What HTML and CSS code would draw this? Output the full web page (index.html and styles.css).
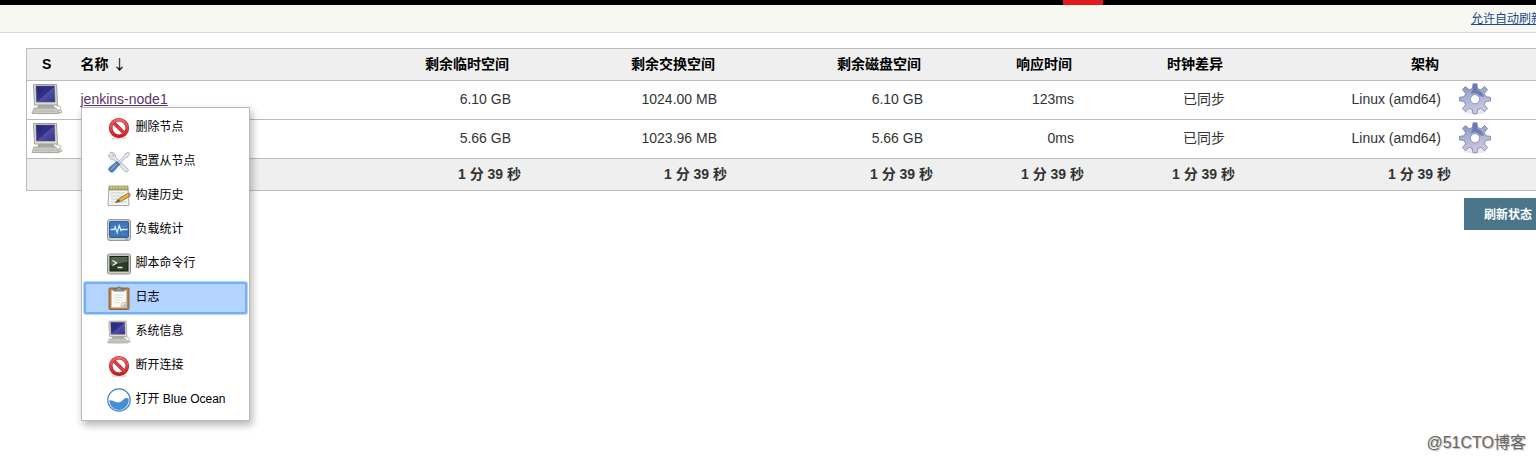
FILE: index.html
```html
<!DOCTYPE html>
<html lang="zh-CN">
<head>
    <meta charset="UTF-8">
    <meta name="viewport" content="width=device-width, initial-scale=1.0">
    <title>节点列表 [Jenkins]</title>
    <link rel="stylesheet" href="styles.css">
</head>
<body>
    <!-- Shared icons -->
    <svg class="icon-defs" aria-hidden="true">
        <defs>
            <linearGradient id="screen" x1="0" y1="0" x2="1" y2="1">
                <stop offset="0" stop-color="#25256f"/>
                <stop offset="0.5" stop-color="#34318e"/>
                <stop offset="0.52" stop-color="#504fa2"/>
                <stop offset="1" stop-color="#35338a"/>
            </linearGradient>
            <linearGradient id="gear-fill" x1="0" y1="0" x2="0.3" y2="1">
                <stop offset="0" stop-color="#7f90bf"/>
                <stop offset="0.5" stop-color="#a9b1d3"/>
                <stop offset="1" stop-color="#cdc6e2"/>
            </linearGradient>
            <linearGradient id="red-fill" x1="0" y1="0" x2="0" y2="1">
                <stop offset="0" stop-color="#ee6a6a"/>
                <stop offset="1" stop-color="#c81c24"/>
            </linearGradient>
            <symbol id="computer" viewBox="0 0 32 32">
                <ellipse cx="15" cy="30" rx="15" ry="1.5" fill="#ddd"/>
                <path d="M25 23c4-1 7 2 3 4" fill="none" stroke="#aaa"/>
                <path d="M8 21h14l2 4H6z" fill="#a9aaa4"/>
                <path d="M2.500 1.500h23l1 20.500h-23z" fill="#dcdcd6" stroke="#9e9e9a"/>
                <path d="M5 3h18.500l.5 16H5.500z" fill="url(#screen)" stroke="#55557a" stroke-width=".6"/>
                <path d="M3 25h22l3 5.500H1z" fill="#d0d0ca" stroke="#9e9e9a" stroke-width=".8"/>
                <path d="M4 27h20M3.500 28.700h22" stroke="#aaa" stroke-width=".8" stroke-dasharray="2 .7"/>
                <path d="M27 27h3l1 2.500h-3z" fill="#ddd" stroke="#999" stroke-width=".6"/>
            </symbol>
            <symbol id="gear" viewBox="0 0 32 32">
                <ellipse cx="16" cy="29" rx="11" ry="2.500" fill="#e8e6ee"/>
                <path d="M14 .8h4l.6 4.700 3.200 1.300 3.800-3.200 3 3-3.200 3.800 1.300 3.300 4.800.6v3.600l-4.800.6-1.300 3.300 3.200 3.800-3 3-3.800-3.200-3.200 1.300-.6 4h-4l-.6-4-3.200-1.300-3.800 3.200-3-3 3.200-3.800-1.300-3.300-4.800-.6v-3.600l4.800-.6 1.300-3.300-3.200-3.800 3-3 3.800 3.200 3.200-1.300z" fill="url(#gear-fill)" stroke="#7580a6" stroke-width=".8" stroke-linejoin="round"/>
                <path d="M13.500 7l1-5.500h3l1 5.500c4 1 6 4 6.500 7l-4.500-1c-2-3-6-3.500-9-1.500z" fill="#4b5fa0" opacity=".6"/>
                <circle cx="16" cy="16.200" r="4.600" fill="#fff" stroke="#8d98bd"/>
            </symbol>
            <symbol id="forbidden" viewBox="0 0 24 24">
                <ellipse cx="12" cy="22" rx="8" ry="1.500" fill="#ddd"/>
                <circle cx="12" cy="12" r="8.300" fill="#fff" stroke="#b5222a" stroke-width="3.600"/>
                <path d="M6.500 6.500l11 11" stroke="#b81a22" stroke-width="3.400"/>
                <circle cx="12" cy="12" r="8.300" fill="none" stroke="url(#red-fill)" stroke-width="2.600"/>
                <path d="M6.500 6.500l11 11" stroke="#de3f45" stroke-width="2.400"/>
            </symbol>
            <symbol id="tools" viewBox="0 0 24 24">
                <path d="M3 2.500c3-1 6 1 5.500 4.500L21 19c1.500 2-1 4-3 2.500L6.500 9.500C3 10 1 7 2 4l3 2.500 2-1z" fill="#dfe3ea" stroke="#a5abb6" stroke-width=".8"/>
                <path d="M21.500 2l1 1-2 4-2 .800-7 7-1.500-1.500 7-7 .800-2z" fill="#e8eaef" stroke="#9ca3b1" stroke-width=".8"/>
                <path d="M10 11.500l2.800 2.800-6.500 7.200c-2 2-6-1.500-4-3.800z" fill="#4f83bd" stroke="#39689f" stroke-width=".9"/>
                <path d="M9.500 14L4 19.500" stroke="#a7c5e5"/>
            </symbol>
            <symbol id="notepad" viewBox="0 0 24 24">
                <path d="M2 4h19l1 17.500H1z" fill="#f5f5ef" stroke="#aaa"/>
                <path d="M2 2h19v4H2z" fill="#a9ad6b" stroke="#87894f" stroke-width=".7"/>
                <path d="M4 1.500v3M7 1.500v3M10 1.500v3M13 1.500v3M16 1.500v3M19 1.500v3" stroke="#e7e8cf" stroke-width=".8"/>
                <path d="M4 9h14M4 12h12M4 15h7M4 18h15" stroke="#c3c3bd" stroke-width=".8"/>
                <path d="M8.500 18.500l3-3.500 9-5.500 2.500 2.700-9.500 5.300z" fill="#e5b543" stroke="#886526" stroke-width=".8"/>
                <path d="M20.500 9.500l1.500-1 2 2.500-1.300 1z" fill="#db6469"/>
                <path d="M8.500 18.500l3-3.500 1.900 2.500z" fill="#655c48"/>
            </symbol>
            <symbol id="monitor" viewBox="0 0 24 24">
                <rect x=".5" y="1.500" width="23" height="21" rx="2.500" fill="#cfd0cc" stroke="#989994"/>
                <rect x="2.500" y="3.500" width="19" height="16" rx="1" fill="#3b72b9" stroke="#345f94"/>
                <path d="M4 8h16M4 16h16M8 5v13M16 5v13" stroke="#5a8ccc" stroke-width=".6"/>
                <path d="M3.500 11.500h3.500l1.200-2.500 2 5.500 2-7 1.800 5 1-1h5.500" fill="none" stroke="#d3f0ff" stroke-width="1.300"/>
                <path d="M18 21h3" stroke="#788" stroke-width=".8"/>
            </symbol>
            <symbol id="terminal" viewBox="0 0 24 24">
                <rect x=".5" y="2" width="23" height="20" rx="2" fill="#cbccc7" stroke="#8f908b"/>
                <rect x="3" y="4.500" width="18" height="14.500" fill="#273b27" stroke="#182018"/>
                <path d="M3.500 5h17v5c-5 0-10 2-17 3z" fill="#53664e"/>
                <path d="M5.500 8.500l4 2.500-4 2.500M10.500 15.500h5" fill="none" stroke="#eef5e8" stroke-width="1.300"/>
            </symbol>
            <symbol id="clipboard" viewBox="0 0 24 24">
                <rect x="2" y="2" width="20" height="21.500" rx="1" fill="#b98047" stroke="#8f6438"/>
                <path d="M4.500 4.500h15v17h-15z" fill="#f8f8f5" stroke="#c5c5bf" stroke-width=".7"/>
                <path d="M19.500 16v5.500h-6z" fill="#bfc0bb"/>
                <path d="M19.500 16l-4.500 1-1.500 4.500" fill="#e8e8e4" stroke="#aaa" stroke-width=".6"/>
                <path d="M7.500 9h9M7.500 11.500h9M7.500 14h7M7.500 16.500h5" stroke="#d8d8d4" stroke-width=".8"/>
                <path d="M7 5V3h3l1-2h2l1 2h3v2z" fill="#999d98" stroke="#62665f" stroke-width=".8"/>
            </symbol>
            <symbol id="ocean" viewBox="0 0 24 24">
                <circle cx="12" cy="12" r="11.200" fill="#fff" stroke="#3a80c4" stroke-width="1.200"/>
                <path d="M2.300 12.500c3-.8 5 2 8.500 2 5 0 5-4.500 8.500-4.500 1 0 1.800.5 2.500 1.300C21.800 17.500 17.500 22 12 22c-5.300 0-9.400-4-9.700-9.500z" fill="#4590d5"/>
            </symbol>
        </defs>
    </svg>

    <header class="page-head"><div class="head-mark"></div></header>
    <nav class="breadcrumb-bar">
        <a href="#">允许自动刷新</a>
    </nav>

    <main class="main-panel">
        <table class="nodes">
            <colgroup>
                <col class="col-status">
                <col>
                <col class="col-space">
                <col class="col-space">
                <col class="col-space">
                <col class="col-time">
                <col class="col-time">
                <col class="col-arch">
                <col class="col-config">
            </colgroup>
            <thead>
                <tr>
                    <th class="status">S</th>
                    <th class="name">名称 <span class="sort">↓</span></th>
                    <th>剩余临时空间</th>
                    <th>剩余交换空间</th>
                    <th>剩余磁盘空间</th>
                    <th>响应时间</th>
                    <th>时钟差异</th>
                    <th>架构</th>
                    <th></th>
                </tr>
            </thead>
            <tbody>
                <tr>
                    <td class="status"><svg class="icon-large"><use href="#computer"/></svg></td>
                    <td class="name">
                        <div class="node-link">
                            <a href="#">jenkins-node1</a>
                            <ul class="context-menu">
                                <li><a href="#"><svg class="icon"><use href="#forbidden"/></svg><span>删除节点</span></a></li>
                                <li><a href="#"><svg class="icon"><use href="#tools"/></svg><span>配置从节点</span></a></li>
                                <li><a href="#"><svg class="icon"><use href="#notepad"/></svg><span>构建历史</span></a></li>
                                <li><a href="#"><svg class="icon"><use href="#monitor"/></svg><span>负载统计</span></a></li>
                                <li><a href="#"><svg class="icon"><use href="#terminal"/></svg><span>脚本命令行</span></a></li>
                                <li><a href="#" class="selected"><svg class="icon"><use href="#clipboard"/></svg><span>日志</span></a></li>
                                <li><a href="#"><svg class="icon"><use href="#computer"/></svg><span>系统信息</span></a></li>
                                <li><a href="#"><svg class="icon"><use href="#forbidden"/></svg><span>断开连接</span></a></li>
                                <li><a href="#"><svg class="icon"><use href="#ocean"/></svg><span>打开 Blue Ocean</span></a></li>
                            </ul>
                        </div>
                    </td>
                    <td>6.10 GB</td>
                    <td>1024.00 MB</td>
                    <td>6.10 GB</td>
                    <td>123ms</td>
                    <td>已同步</td>
                    <td>Linux (amd64)</td>
                    <td class="config"><a href="#" aria-label="配置"><svg class="icon-large"><use href="#gear"/></svg></a></td>
                </tr>
                <tr>
                    <td class="status"><svg class="icon-large"><use href="#computer"/></svg></td>
                    <td class="name"></td>
                    <td>5.66 GB</td>
                    <td>1023.96 MB</td>
                    <td>5.66 GB</td>
                    <td>0ms</td>
                    <td>已同步</td>
                    <td>Linux (amd64)</td>
                    <td class="config"><a href="#" aria-label="配置"><svg class="icon-large"><use href="#gear"/></svg></a></td>
                </tr>
            </tbody>
            <tfoot>
                <tr>
                    <td></td>
                    <td></td>
                    <td>1 分 39 秒</td>
                    <td>1 分 39 秒</td>
                    <td>1 分 39 秒</td>
                    <td>1 分 39 秒</td>
                    <td>1 分 39 秒</td>
                    <td>1 分 39 秒</td>
                    <td></td>
                </tr>
            </tfoot>
        </table>
        <div class="actions">
            <button type="button" class="refresh">刷新状态</button>
        </div>
    </main>
    <div class="watermark">@51CTO博客</div>
</body>
</html>
```
FILE: styles.css
```css
/* General Styles */
* {
    box-sizing: border-box;
}

body {
    position: relative;
    min-height: 100vh;
    margin: 0;
    font-family: "Liberation Sans", "Noto Sans CJK SC", sans-serif;
    font-size: 14px;
    line-height: 20px;
    color: #333;
    background-color: #fff;
    overflow-x: hidden;
}

.icon-defs {
    position: absolute;
    width: 0;
    height: 0;
}

/* Header */
.page-head {
    height: 5px;
    padding-right: 433px;
    background-color: #000;
}

.head-mark {
    width: 40px;
    height: 5px;
    margin-left: auto;
    background-color: #e3191c;
}

.breadcrumb-bar {
    display: flex;
    justify-content: flex-end;
    height: 28px;
    margin-right: -7px;
    border-bottom: 1px solid #d3d7cf;
    background-color: #f8f8f3;
    font-size: 12px;
    line-height: 28px;
}

.breadcrumb-bar a {
    color: #204a87;
}

/* Nodes Table */
.main-panel {
    padding: 15px 0 0 26px;
}

.nodes {
    width: 100%;
    table-layout: fixed;
    border-collapse: collapse;
    border: 1px solid #bbb;
    border-right: 0;
}

.col-status {
    width: 40px;
}

.col-space {
    width: 206px;
}

.col-time {
    width: 151px;
}

.col-arch {
    width: 216px;
}

.col-config {
    width: 83px;
}

.nodes th, .nodes td {
    padding: 0 12px 2px 0;
    text-align: right;
}

.nodes tr {
    height: 39px;
    border-bottom: 1px solid #bbb;
}

.nodes thead tr, .nodes tfoot tr {
    height: 32px;
    background-color: #efefef;
}

.nodes th {
    padding-right: 14px;
    color: #000;
}

.nodes tfoot td {
    padding-right: 2px;
    font-weight: bold;
}

.nodes .status {
    padding: 0 0 2px;
    text-align: center;
}

.nodes .name {
    padding: 0 0 2px 14px;
    text-align: left;
}

.nodes .config {
    padding: 0 0 2px 6px;
    text-align: left;
}

.sort {
    font-family: "Noto Sans CJK SC", sans-serif;
    font-weight: normal;
}

.icon-large {
    display: inline-block;
    width: 32px;
    height: 32px;
    vertical-align: middle;
}

.node-link {
    position: relative;
}

.node-link > a {
    color: #5c3566;
}

/* Context Menu */
.context-menu {
    position: absolute;
    top: 18px;
    left: 0;
    z-index: 10;
    width: 169px;
    margin: 0;
    padding: 3px 2px;
    border: 1px solid #bbb;
    background-color: #fff;
    box-shadow: 2px 4px 8px rgba(0, 0, 0, 0.3);
    list-style: none;
}

.context-menu li {
    padding: 1px 0;
}

.context-menu a {
    display: flex;
    align-items: center;
    gap: 5px;
    height: 32px;
    padding-left: 21px;
    border: 2px solid transparent;
    color: #000;
    font-size: 12px;
    line-height: 20px;
    text-decoration: none;
}

.context-menu span {
    padding-bottom: 2px;
}

.context-menu .selected {
    border-color: #74b0f5;
    border-radius: 2px;
    background-color: #b3d4ff;
    box-shadow: 0 0 0 1px #b3d4ff;
}

.icon {
    width: 24px;
    height: 24px;
}

/* Refresh Button */
.actions {
    display: flex;
    justify-content: flex-end;
    margin: 7px -16px 0 0;
}

.refresh {
    height: 32px;
    padding: 0 19px 2px;
    border: 1px solid #4b758b;
    background-color: #4b758b;
    color: #fff;
    font-family: inherit;
    font-size: 12px;
    font-weight: bold;
}

.watermark {
    position: absolute;
    right: 10px;
    bottom: 6px;
    color: #666;
    font-size: 16px;
    text-shadow: 1px 1px 1px #bbb;
}
```
